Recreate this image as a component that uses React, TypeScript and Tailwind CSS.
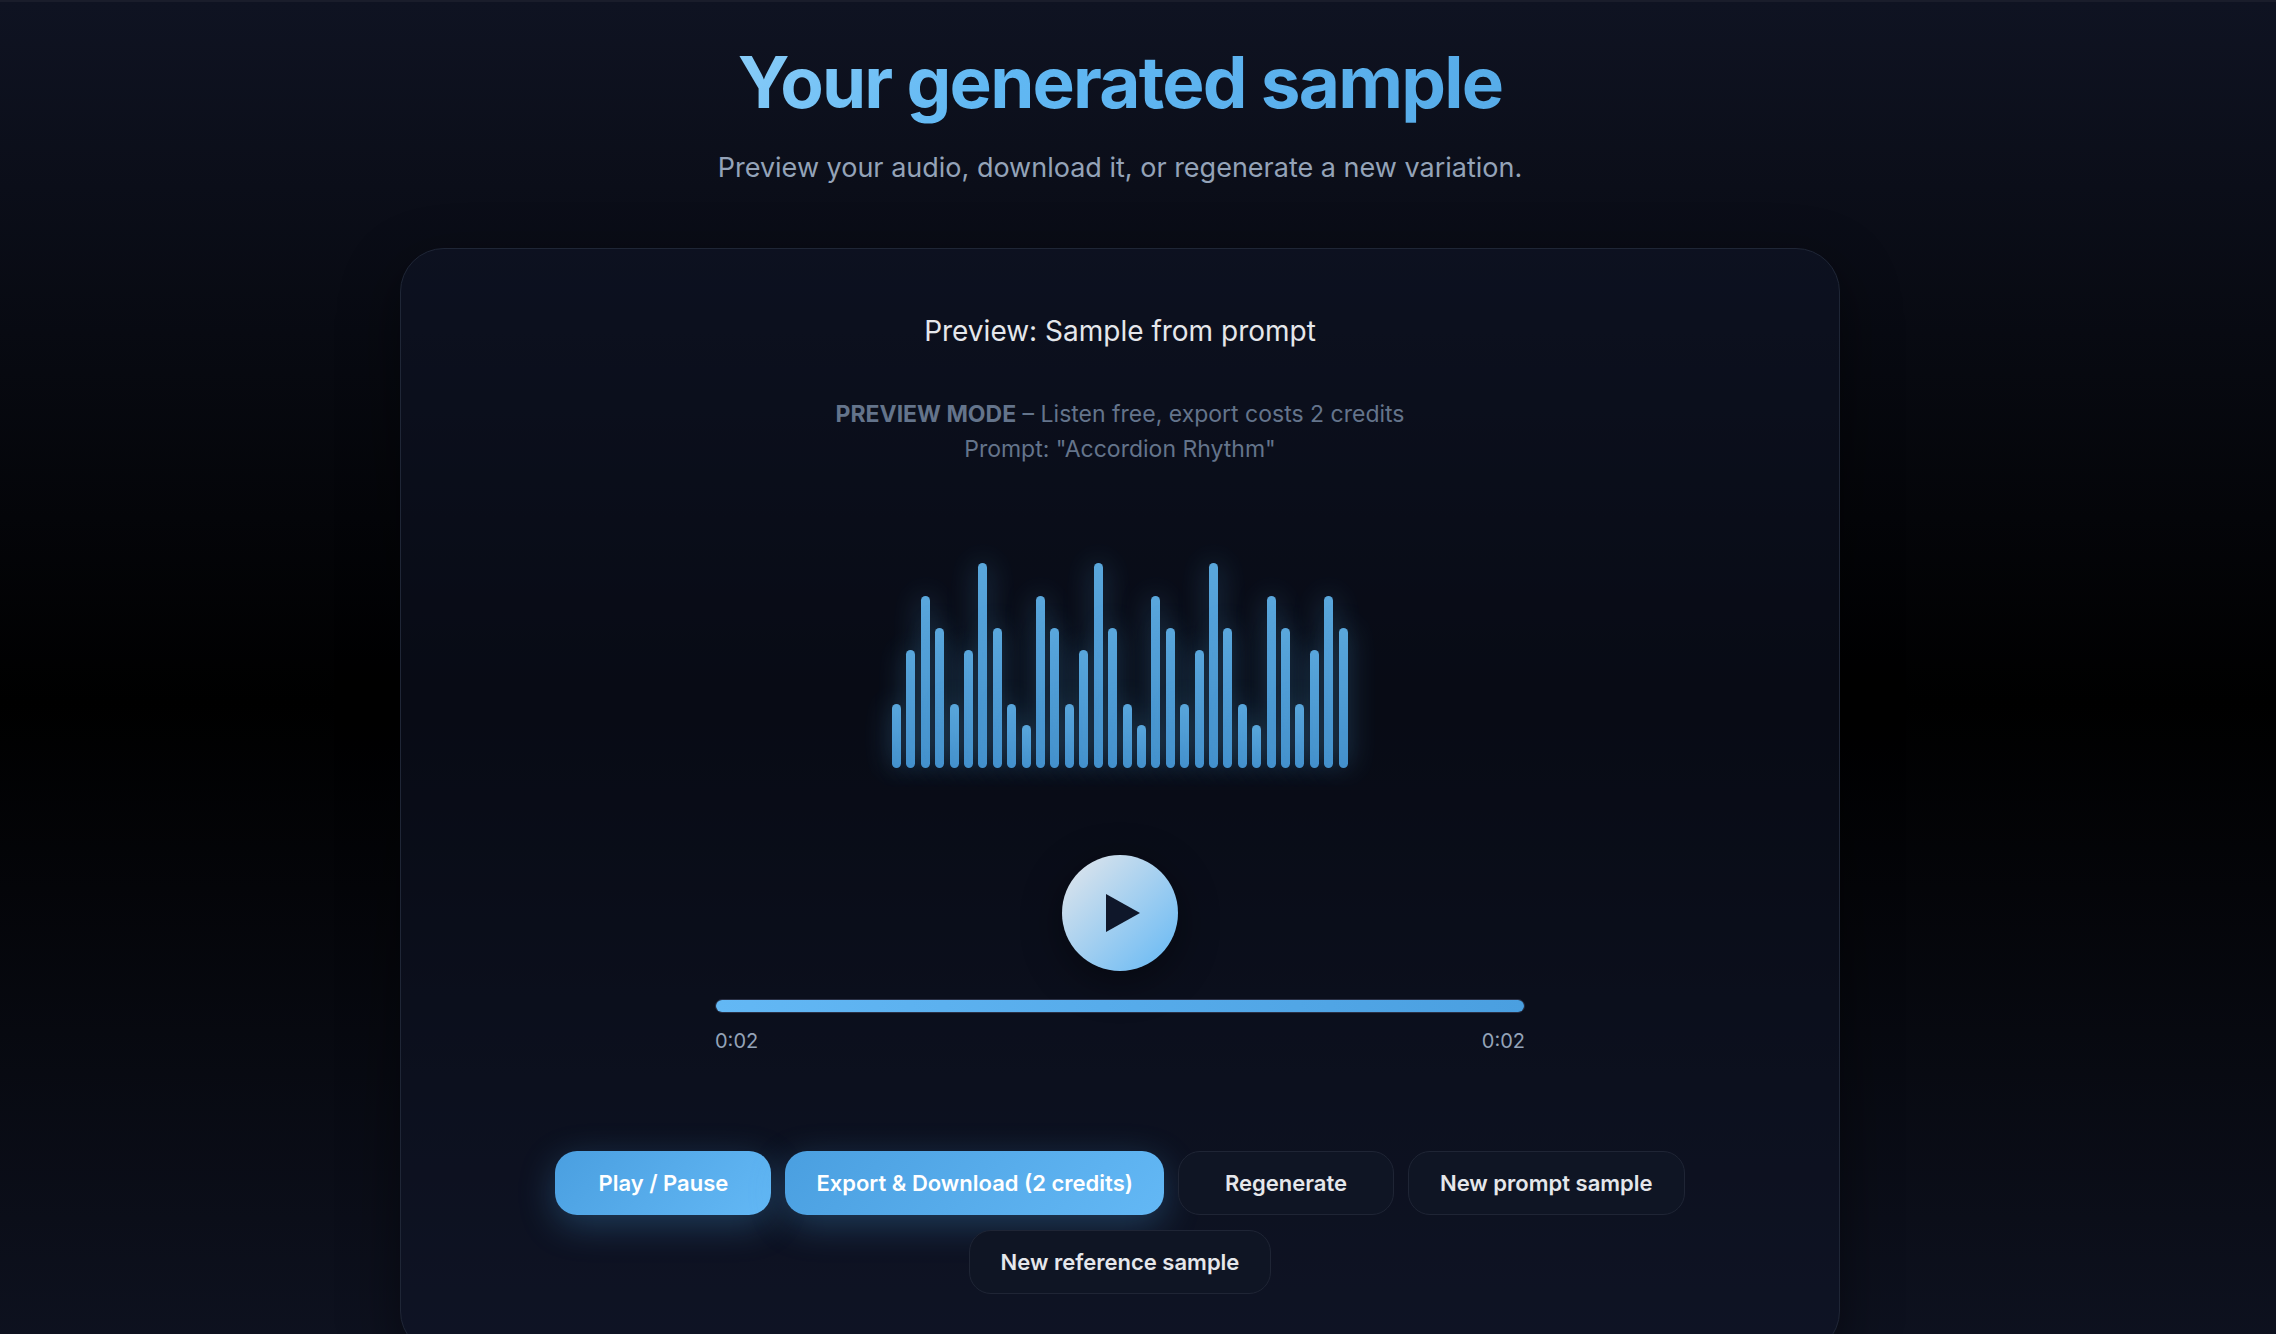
import { useState } from "react";
import clsx from "clsx";

const BARS = [
  64, 118, 172, 140, 64, 118, 205, 140, 64, 43, 172, 140, 64, 118, 205, 140,
  64, 43, 172, 140, 64, 118, 205, 140, 64, 43, 172, 140, 64, 118, 172, 140,
];

const actions = [
  { id: "play", label: "Play / Pause", primary: true },
  { id: "export", label: "Export & Download (2 credits)", primary: true },
  { id: "regenerate", label: "Regenerate", primary: false },
  { id: "prompt", label: "New prompt sample", primary: false },
  { id: "reference", label: "New reference sample", primary: false },
];

function Waveform() {
  return (
    <div className="flex h-[206px] w-[456px] items-end justify-between opacity-90">
      {BARS.map((height, i) => (
        <span
          key={i}
          className="w-[9px] rounded-full bg-[linear-gradient(180deg,#63b8f2,#4a9fe0)] shadow-[0_0_28px_rgba(99,184,242,0.4)]"
          style={{ height }}
        />
      ))}
    </div>
  );
}

export default function App() {
  const [playing, setPlaying] = useState(false);
  const toggle = () => setPlaying(!playing);

  return (
    <div className="h-screen overflow-x-hidden overflow-y-auto bg-black font-['Inter',sans-serif] text-[#e5e7eb] [scrollbar-width:none]">
      <div className="min-h-full border-t-2 border-[#1a1d2b] bg-[linear-gradient(180deg,#0f1322,#000_50%,#0f1322)] pr-9 pb-12">
        <main className="mx-auto flex max-w-[1440px] flex-col items-center">
          {/* Heading */}
          <h1 className="mt-9 bg-[linear-gradient(135deg,#8acdf8,#61b8f3_35%,#56abe8)] bg-clip-text text-[71px] leading-[88px] font-bold tracking-tight text-transparent">
            Your generated sample
          </h1>
          <p className="mt-5 text-[27px] leading-[44px] text-[#94a3b8]">
            Preview your audio, download it, or regenerate a new variation.
          </p>

          {/* Player card */}
          <section className="mt-[58px] flex w-full flex-col items-center rounded-[44px] border border-[#1f2636] bg-[#0f1629]/50 px-20 py-[60px] shadow-[0_20px_60px_rgba(0,0,0,0.45)]">
            <h2 className="text-[28px] leading-[44px]">Preview: Sample from prompt</h2>
            <p className="mt-11 text-center text-[23px] leading-[35px] text-[#64748b]">
              <strong>PREVIEW MODE</strong> – Listen free, export costs 2 credits
              <br />
              Prompt: "Accordion Rhythm"
            </p>

            <div className="mt-[95px]">
              <Waveform />
            </div>

            <button
              aria-label="Play"
              onClick={toggle}
              className="mt-[87px] flex size-[116px] items-center justify-center rounded-full bg-[linear-gradient(135deg,#e5e7eb,#63b8f5)] shadow-[0_10px_40px_rgba(0,0,0,0.4)]"
            >
              <svg viewBox="0 0 34 38" className="ml-1.5 h-[38px] w-[34px] fill-[#0f172a]">
                <path d="M0 0 L34 19 L0 38 Z" />
              </svg>
            </button>

            <div className="mt-7 w-[810px] max-w-full">
              <div className="h-[14px] overflow-hidden rounded-full border border-[#2a3045]">
                <div className="h-full w-full bg-[linear-gradient(90deg,#63b8f5,#4a9fe0)]" />
              </div>
              <div className="mt-3 flex justify-between text-[20px] leading-[32px] text-[#94a3b8]">
                <span>0:02</span>
                <span>0:02</span>
              </div>
            </div>

            <div className="mt-[94px] flex flex-wrap justify-center gap-x-[14px] gap-y-[15px]">
              {actions.map((action) => (
                <button
                  key={action.id}
                  onClick={action.id === "play" ? toggle : undefined}
                  className={clsx(
                    "h-16 min-w-[216px] rounded-[22px] px-[31px] text-[22px] font-semibold",
                    action.primary
                      ? "bg-[linear-gradient(135deg,#4a9fe0,#63b8f5)] text-white shadow-[0_10px_36px_rgba(74,159,224,0.3)]"
                      : "border border-[#1f2535] bg-[#0f1524]"
                  )}
                >
                  {action.label}
                </button>
              ))}
            </div>
          </section>
        </main>
      </div>
    </div>
  );
}
